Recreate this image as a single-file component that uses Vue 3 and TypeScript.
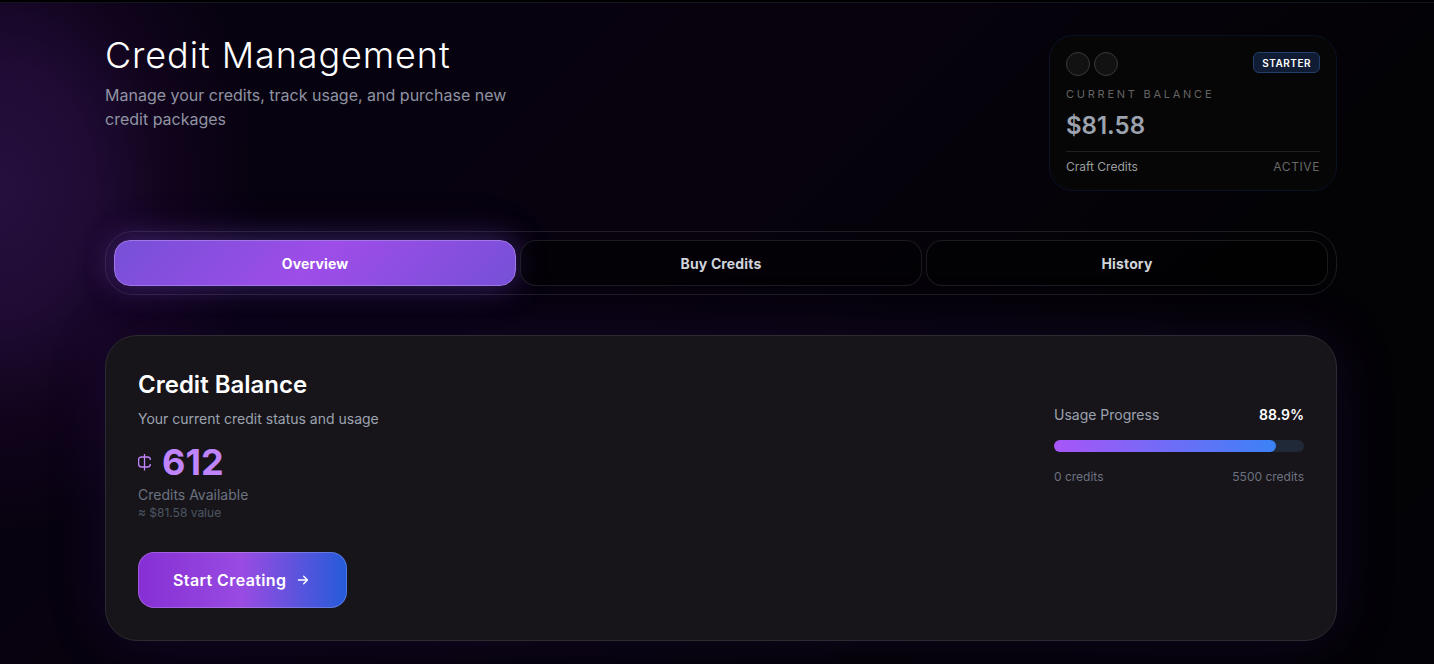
<script setup lang="ts">
import { computed, ref } from 'vue'

const tabs = ['Overview', 'Buy Credits', 'History']
const active = ref('Overview')

const balance = '$81.58'
const credits = 612
const total = 5500
const used = computed(() => Math.round(((total - credits) / total) * 1000) / 10)
</script>

<template>
  <div class="page">
    <div class="topbar"></div>
    <main class="container">
      <header class="head">
        <div class="intro">
          <h1>Credit Management</h1>
          <p>Manage your credits, track usage, and purchase new credit packages</p>
        </div>
        <section class="wallet" aria-label="Wallet">
          <div class="wallet-top">
            <div class="dots"><span></span><span></span></div>
            <span class="badge">STARTER</span>
          </div>
          <div class="wallet-label">CURRENT BALANCE</div>
          <div class="wallet-value">{{ balance }}</div>
          <div class="wallet-foot">
            <span class="craft">Craft Credits</span>
            <span class="status">ACTIVE</span>
          </div>
        </section>
      </header>

      <nav class="tabs">
        <button
          v-for="tab in tabs"
          :key="tab"
          type="button"
          class="tab"
          :class="{ on: tab === active }"
          @click="active = tab"
        >
          {{ tab }}
        </button>
      </nav>

      <section class="panel">
        <div class="row">
          <div>
            <h2>Credit Balance</h2>
            <p class="sub">Your current credit status and usage</p>
            <div class="amount">
              <svg class="coin" viewBox="0 0 14 20" aria-hidden="true">
                <path d="M12.4 8C12.4 5.8 11.4 5 9.4 5H3.8C1.6 5 .6 6 .6 8V12C.6 14 1.6 15 3.8 15H9.4C11.4 15 12.4 14.2 12.4 12" />
                <path d="M6.5 2V18.5" />
              </svg>
              <strong>{{ credits }}</strong>
            </div>
            <div class="avail">Credits Available</div>
            <div class="approx">≈ {{ balance }} value</div>
          </div>
          <div class="usage">
            <div class="usage-head">
              <span>Usage Progress</span>
              <b>{{ used }}%</b>
            </div>
            <div class="track">
              <div class="fill" :style="{ width: used + '%' }"></div>
            </div>
            <div class="usage-foot">
              <span>0 credits</span>
              <span>{{ total }} credits</span>
            </div>
          </div>
        </div>
        <button type="button" class="cta">
          Start Creating
          <svg viewBox="0 0 12 12" aria-hidden="true">
            <path d="M1.5 6H10.3M6.7 2.3L10.4 6L6.7 9.7" />
          </svg>
        </button>
      </section>
    </main>
  </div>
</template>

<style>
html,
body {
  background: #050208;
}
</style>

<style scoped>
* {
  box-sizing: border-box;
}
.page {
  min-height: 100vh;
  overflow: hidden;
  font-family: Inter, 'Liberation Sans', sans-serif;
  color: #fff;
  background:
    radial-gradient(ellipse 260px 350px at 0 190px, rgba(105, 45, 165, 0.31) 0%, rgba(98, 36, 150, 0.27) 35%, rgba(75, 15, 105, 0.14) 65%, transparent 100%),
    linear-gradient(135deg, #070211 0%, #07020d 45%, #030205 72%, #030206 100%);
}
.topbar {
  height: 3px;
  background: #000;
  border-bottom: 1px solid #12151d;
}
.container {
  max-width: 1288px;
  margin: 0 auto;
  padding: 32px 24px 24px 32px;
}
h1,
h2,
p {
  margin: 0;
}
.head {
  display: flex;
  justify-content: space-between;
  align-items: flex-start;
}
.intro {
  max-width: 448px;
}
h1 {
  font-size: 36px;
  line-height: 40px;
  font-weight: 300;
  letter-spacing: 0.025em;
}
.intro p {
  margin-top: 8px;
  font-size: 16px;
  line-height: 24px;
  color: #9094a2;
}
.wallet {
  width: 288px;
  padding: 16px;
  border: 1px solid #0a1123;
  border-radius: 24px;
  background: #060606;
}
.wallet-top {
  display: flex;
  justify-content: space-between;
  align-items: flex-start;
}
.dots {
  display: flex;
  gap: 4px;
}
.dots span {
  width: 24px;
  height: 24px;
  border: 1px solid #3a3a3a;
  border-radius: 50%;
  background: #121212;
}
.badge {
  padding: 3px 8px 1px;
  border: 1px solid #233f6c;
  border-radius: 6px;
  background: #101c34;
  font-size: 10px;
  line-height: 15px;
  font-weight: 600;
  letter-spacing: 0.05em;
}
.wallet-label {
  margin-top: 10px;
  font-size: 11px;
  line-height: 16px;
  letter-spacing: 0.25em;
  color: #646464;
}
.wallet-value {
  margin-top: 8px;
  font-size: 24px;
  line-height: 32px;
  font-weight: 600;
  color: #9ca3af;
}
.wallet-foot {
  display: flex;
  justify-content: space-between;
  margin-top: 9px;
  padding-top: 7px;
  border-top: 1px solid #202020;
  font-size: 12px;
  line-height: 15px;
}
.craft {
  color: #9c9c9c;
}
.status {
  color: #686868;
  letter-spacing: 0.05em;
}
.tabs {
  display: grid;
  grid-template-columns: repeat(3, 1fr);
  gap: 4px;
  margin-top: 40px;
  padding: 8px;
  border: 1px solid rgba(255, 255, 255, 0.1);
  border-radius: 28px;
}
.tab {
  padding: 13px 16px 11px;
  border: 1px solid rgba(255, 255, 255, 0.1);
  border-radius: 16px;
  background: rgba(0, 0, 0, 0.5);
  color: #d1d5db;
  font: 700 14px/20px Inter, 'Liberation Sans', sans-serif;
  letter-spacing: 0.01em;
}
.tab.on {
  color: #fff;
  border-color: #a377e8;
  background: linear-gradient(135deg, #7650d7, #9e4de8 50%, #7650d7);
  box-shadow: 0 0 30px rgba(139, 92, 246, 0.36), 0 0 60px rgba(139, 92, 246, 0.08);
}
.panel {
  margin-top: 40px;
  padding: 33px 32px 32px;
  border: 1px solid #2c2b2f;
  border-radius: 32px;
  background: #17151a;
  box-shadow: 0 0 60px rgba(91, 40, 180, 0.17), inset 0 0 40px rgba(255, 255, 255, 0.01);
}
.row {
  display: flex;
  justify-content: space-between;
  align-items: center;
}
h2 {
  font-size: 24px;
  line-height: 32px;
  font-weight: 600;
}
.sub {
  margin-top: 8px;
  font-size: 14px;
  line-height: 20px;
  color: #9ca3af;
}
.amount {
  display: flex;
  align-items: center;
  gap: 10px;
  margin-top: 13px;
  color: #c084fc;
}
.amount strong {
  font-size: 36px;
  line-height: 40px;
  font-weight: 700;
}
.coin {
  width: 14px;
  height: 20px;
}
.coin path {
  fill: none;
  stroke: currentColor;
  stroke-width: 1.3;
}
.avail {
  margin-top: 3px;
  font-size: 14px;
  line-height: 20px;
  color: #6b7280;
}
.approx {
  font-size: 12px;
  line-height: 16px;
  color: #4b5563;
}
.usage {
  width: 250px;
}
.usage-head,
.usage-foot {
  display: flex;
  justify-content: space-between;
}
.usage-head {
  font-size: 14px;
  line-height: 20px;
  color: #9ca3af;
}
.usage-head b {
  font-weight: 600;
  color: #fff;
}
.track {
  height: 12px;
  margin: 15px 0 17px;
  border-radius: 6px;
  background: #1f2937;
}
.fill {
  height: 100%;
  border-radius: 6px;
  background: linear-gradient(90deg, #a855f7, #3b82f6);
}
.usage-foot {
  font-size: 12px;
  line-height: 16px;
  color: #6b7280;
}
.cta {
  display: flex;
  align-items: center;
  gap: 11px;
  height: 56px;
  margin-top: 31px;
  padding: 0 37px 0 34px;
  border: 1px solid rgba(255, 255, 255, 0.2);
  border-radius: 16px;
  background: linear-gradient(90deg, #862fd4, #994be2 50%, #245bd8) border-box;
  color: #fff;
  font: 600 16px/24px Inter, 'Liberation Sans', sans-serif;
  letter-spacing: 0.025em;
}
.cta svg {
  width: 12px;
  height: 12px;
}
.cta path {
  fill: none;
  stroke: currentColor;
  stroke-width: 1.4;
  stroke-linecap: round;
  stroke-linejoin: round;
}
</style>
